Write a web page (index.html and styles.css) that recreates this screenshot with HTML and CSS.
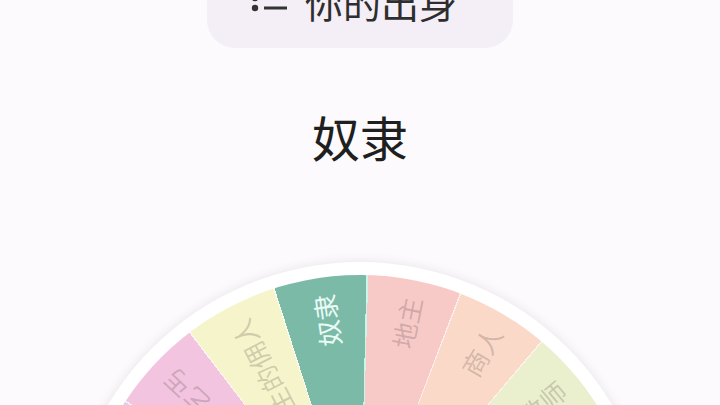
FILE: index.html
```html
<!DOCTYPE html>
<html lang="zh">
<head>
  <meta charset="UTF-8" />
  <meta name="viewport" content="width=device-width, initial-scale=1.0" />
  <title>你的出身</title>
  <link rel="stylesheet" href="styles.css">
</head>
<body>
  <div class="topic">
    <svg class="topic-icon" width="36" height="40" viewBox="0 0 36 40">
      <circle cx="4" cy="7" r="3.2" />
      <circle cx="4" cy="17" r="3.2" />
      <circle cx="4" cy="27" r="3.2" />
      <rect x="13" y="5.5" width="23" height="3" />
      <rect x="13" y="15.5" width="23" height="3" />
      <rect x="13" y="25.5" width="23" height="3" />
    </svg>
    <span class="topic-title">你的出身</span>
  </div>

  <div class="result">奴隶</div>

  <div class="wheel">
    <div class="disc">
      <div class="label">贵族</div>
      <div class="label">乞丐</div>
      <div class="label">地主的佣人</div>
      <div class="label picked">奴隶</div>
      <div class="label">地主</div>
      <div class="label">商人</div>
      <div class="label">教师</div>
      <div class="label">农民</div>
    </div>
  </div>
</body>
</html>
```

FILE: styles.css
```css
html, body {
  margin: 0;
  height: 405px;
  overflow: hidden;
}
body {
  font-family: "Noto Sans CJK SC", "Noto Sans", sans-serif;
  background: #fcfafc;
  color: #222;
}
.topic {
  width: 306px;
  height: 78px;
  margin: -30px auto 0;
  padding: 0 12px 27px 0;
  box-sizing: border-box;
  display: flex;
  align-items: flex-end;
  justify-content: center;
  gap: 18px;
  background: #f4eef6;
  border-radius: 28px;
}
.topic-icon {
  fill: #333;
  flex: none;
}
.topic-title {
  font-size: 38px;
  line-height: 38px;
  color: #2e2e2e;
}
.result {
  margin-top: 64px;
  text-align: center;
  font-size: 48px;
  line-height: 48px;
  color: #1f1f1f;
}
.wheel {
  width: 588px;
  height: 588px;
  margin: 102px auto 0;
  padding: 13px;
  box-sizing: border-box;
  border-radius: 50%;
  background: #fff;
  box-shadow: 0 0 12px rgba(0, 0, 0, 0.09);
}
.disc {
  position: relative;
  width: 100%;
  height: 100%;
  border-radius: 50%;
  background: conic-gradient(from 284.2deg,
    #d9d1ee 0deg 19.1deg,
    #fbf3f8 19.1deg 19.4deg,
    #f3c4df 19.4deg 38.4deg,
    #fbf7f0 38.4deg 38.7deg,
    #f6f4cb 38.7deg 57.8deg,
    #fbfbef 57.8deg 58.1deg,
    #7bbaa7 58.1deg 77.1deg,
    #cdf4eb 77.1deg 77.5deg,
    #f7c9c7 77.5deg 96.6deg,
    #fdeeea 96.6deg 96.9deg,
    #fbd9c8 96.9deg 115.9deg,
    #fdf3ea 115.9deg 116.2deg,
    #eaf0cd 116.2deg 135.5deg,
    #cfe3f0 135.5deg 154.9deg,
    #e3d8f0 154.9deg 360deg);
}
.label {
  position: absolute;
  left: 50%;
  top: 50%;
  width: 281px;
  height: 30px;
  margin-top: -15px;
  padding-right: 17px;
  box-sizing: border-box;
  transform-origin: 0 50%;
  text-align: right;
  font-size: 26px;
  line-height: 30px;
  color: rgba(70, 60, 60, 0.22);
  white-space: nowrap;
}
.label.picked {
  color: #eafbf6;
}
.label:nth-child(1) { transform: rotate(-156.1deg); }
.label:nth-child(2) { transform: rotate(-136.75deg); }
.label:nth-child(3) { transform: rotate(-117.4deg); }
.label:nth-child(4) { transform: rotate(-98.05deg); }
.label:nth-child(5) { transform: rotate(-78.7deg); }
.label:nth-child(6) { transform: rotate(-59.35deg); }
.label:nth-child(7) { transform: rotate(-40deg); }
.label:nth-child(8) { transform: rotate(-20.7deg); }
```
